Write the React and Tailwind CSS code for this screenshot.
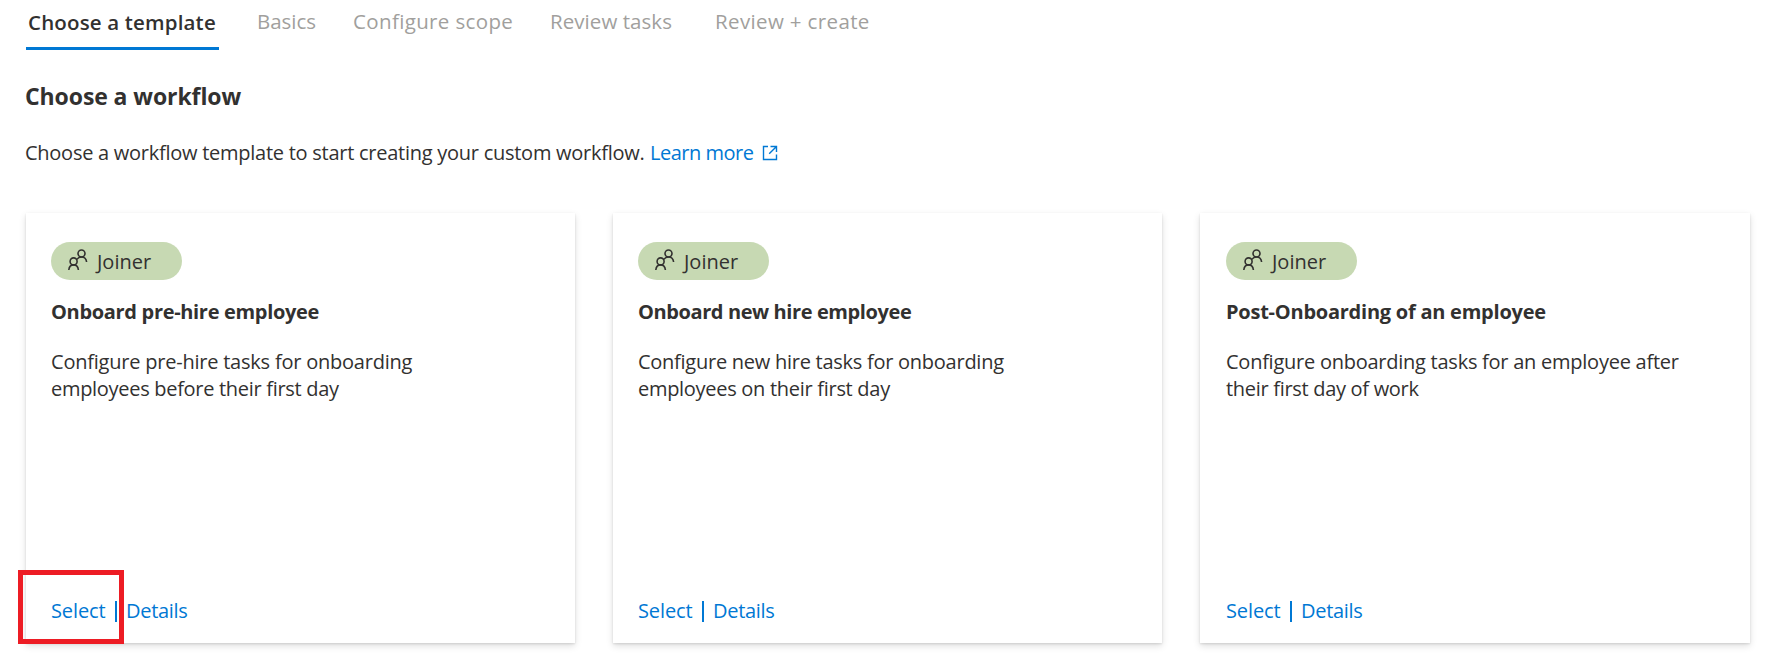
const tabs = [
  { label: "Basics", cls: "ml-[38px] w-[96px] tracking-[-0.05px]" },
  { label: "Configure scope", cls: "w-[197px] tracking-[0.36px]" },
  { label: "Review tasks", cls: "w-[165px] tracking-[0.06px]" },
  { label: "Review + create", cls: "tracking-[0.36px]" },
];

const cards = [
  {
    title: "Onboard pre-hire employee",
    titleCls: "tracking-[-0.32px]",
    lines: [
      { text: "Configure pre-hire tasks for onboarding", cls: "tracking-[-0.22px]" },
      { text: "employees before their first day", cls: "tracking-[-0.30px]" },
    ],
    highlighted: true,
    cardCls: "w-[549px] pl-[25px]",
  },
  {
    title: "Onboard new hire employee",
    titleCls: "tracking-[-0.4px]",
    lines: [
      { text: "Configure new hire tasks for onboarding", cls: "tracking-[-0.26px]" },
      { text: "employees on their first day", cls: "tracking-[-0.29px]" },
    ],
    cardCls: "ml-[38px] w-[549px] pl-[25px]",
  },
  {
    title: "Post-Onboarding of an employee",
    titleCls: "tracking-[-0.24px]",
    lines: [
      { text: "Configure onboarding tasks for an employee after", cls: "tracking-[-0.25px]" },
      { text: "their first day of work", cls: "tracking-[-0.3px]" },
    ],
    cardCls: "ml-[38px] w-[550px] pl-[26px]",
  },
];

function PeopleIcon() {
  return (
    <svg width="20" height="22" viewBox="0 0 20 22" fill="none" stroke="#323130" strokeWidth="1.6">
      <circle cx="5.6" cy="12.4" r="3.5" />
      <path d="M0.8 21c.3-3 2.200-5.100 4.800-5.100s4.500 2.100 4.800 5.100" />
      <circle cx="13.500" cy="4.500" r="3.500" />
      <path d="M8.800 10.400C10 8.700 11.700 8 13.500 8c2.900 0 4.800 2.100 5.100 5" />
    </svg>
  );
}

function ExternalLinkIcon() {
  return (
    <svg className="ml-[9px]" width="16" height="16" viewBox="0 0 16 16" fill="none" stroke="#0078d4" strokeWidth="1.4">
      <path d="M6 1.500H1.500v13h13V9.500" />
      <path d="M8.500 1.500h6V7M14.500 1.500L7.200 8.800" />
    </svg>
  );
}

function Card({ card }) {
  return (
    <section
      className={`relative flex h-[430px] flex-col bg-white pt-[29px] shadow-[0_3px_7px_0_rgba(0,0,0,0.13),0_1px_2px_0_rgba(0,0,0,0.11)] ${card.cardCls}`}
    >
      <div className="flex h-[38px] w-[131px] items-center rounded-full bg-[#c7d9b3] pl-[17px]">
        <div className="-mt-[2px]"><PeopleIcon /></div>
        <span className="mt-[1px] ml-[9px]">Joiner</span>
      </div>
      <h2 className={`mt-[18px] leading-[27px] font-bold ${card.titleCls}`}>{card.title}</h2>
      <p className="mt-[23px] leading-[27px]">
        {card.lines.map((line) => (
          <span key={line.text} className={`block whitespace-nowrap ${line.cls}`}>{line.text}</span>
        ))}
      </p>
      <div className="mt-auto mb-[19px] flex h-[27px] items-center leading-[27px] text-[#0078d4]">
        <a className="w-[64px] tracking-[-0.1px]">Select</a>
        <span className="mt-[2px] h-[21px] w-[2px] bg-[#0078d4]" />
        <a className="ml-[9px] tracking-[-0.3px]">Details</a>
      </div>
      {card.highlighted && (
        <div className="absolute -bottom-px -left-[8px] h-[74px] w-[106px] border-[5px] border-[#ed1c24]" />
      )}
    </section>
  );
}

export default function App() {
  return (
    <main className="h-[670px] w-[1770px] overflow-hidden bg-white pl-[26px] font-['Open_Sans',sans-serif] text-[20px] text-[#323130]">
      <nav className="flex h-[50px] text-[20.5px] leading-[28px] whitespace-nowrap text-[#a19f9d]">
        <div className="h-[50px] w-[193px] border-b-[3px] border-[#0078d4] pt-[8px] pl-[2px] font-semibold tracking-[0.16px] text-[#323130]">
          Choose a template
        </div>
        {tabs.map((tab) => (
          <div key={tab.label} className={`pt-[7px] ${tab.cls}`}>{tab.label}</div>
        ))}
      </nav>
      <h1 className="mt-[30px] -ml-px text-[23px] leading-[32px] font-bold tracking-[-0.09px]">Choose a workflow</h1>
      <div className="mt-[27px] flex h-[28px] items-center leading-[28px] whitespace-nowrap">
        <span className="-ml-px w-[625px] tracking-[-0.26px]">
          Choose a workflow template to start creating your custom workflow.
        </span>
        <a className="flex items-center text-[#0078d4]">
          <span className="w-[103px] tracking-[-0.5px]">Learn more</span>
          <ExternalLinkIcon />
        </a>
      </div>
      <div className="mt-[46px] flex">
        {cards.map((card) => (
          <Card key={card.title} card={card} />
        ))}
      </div>
    </main>
  );
}
